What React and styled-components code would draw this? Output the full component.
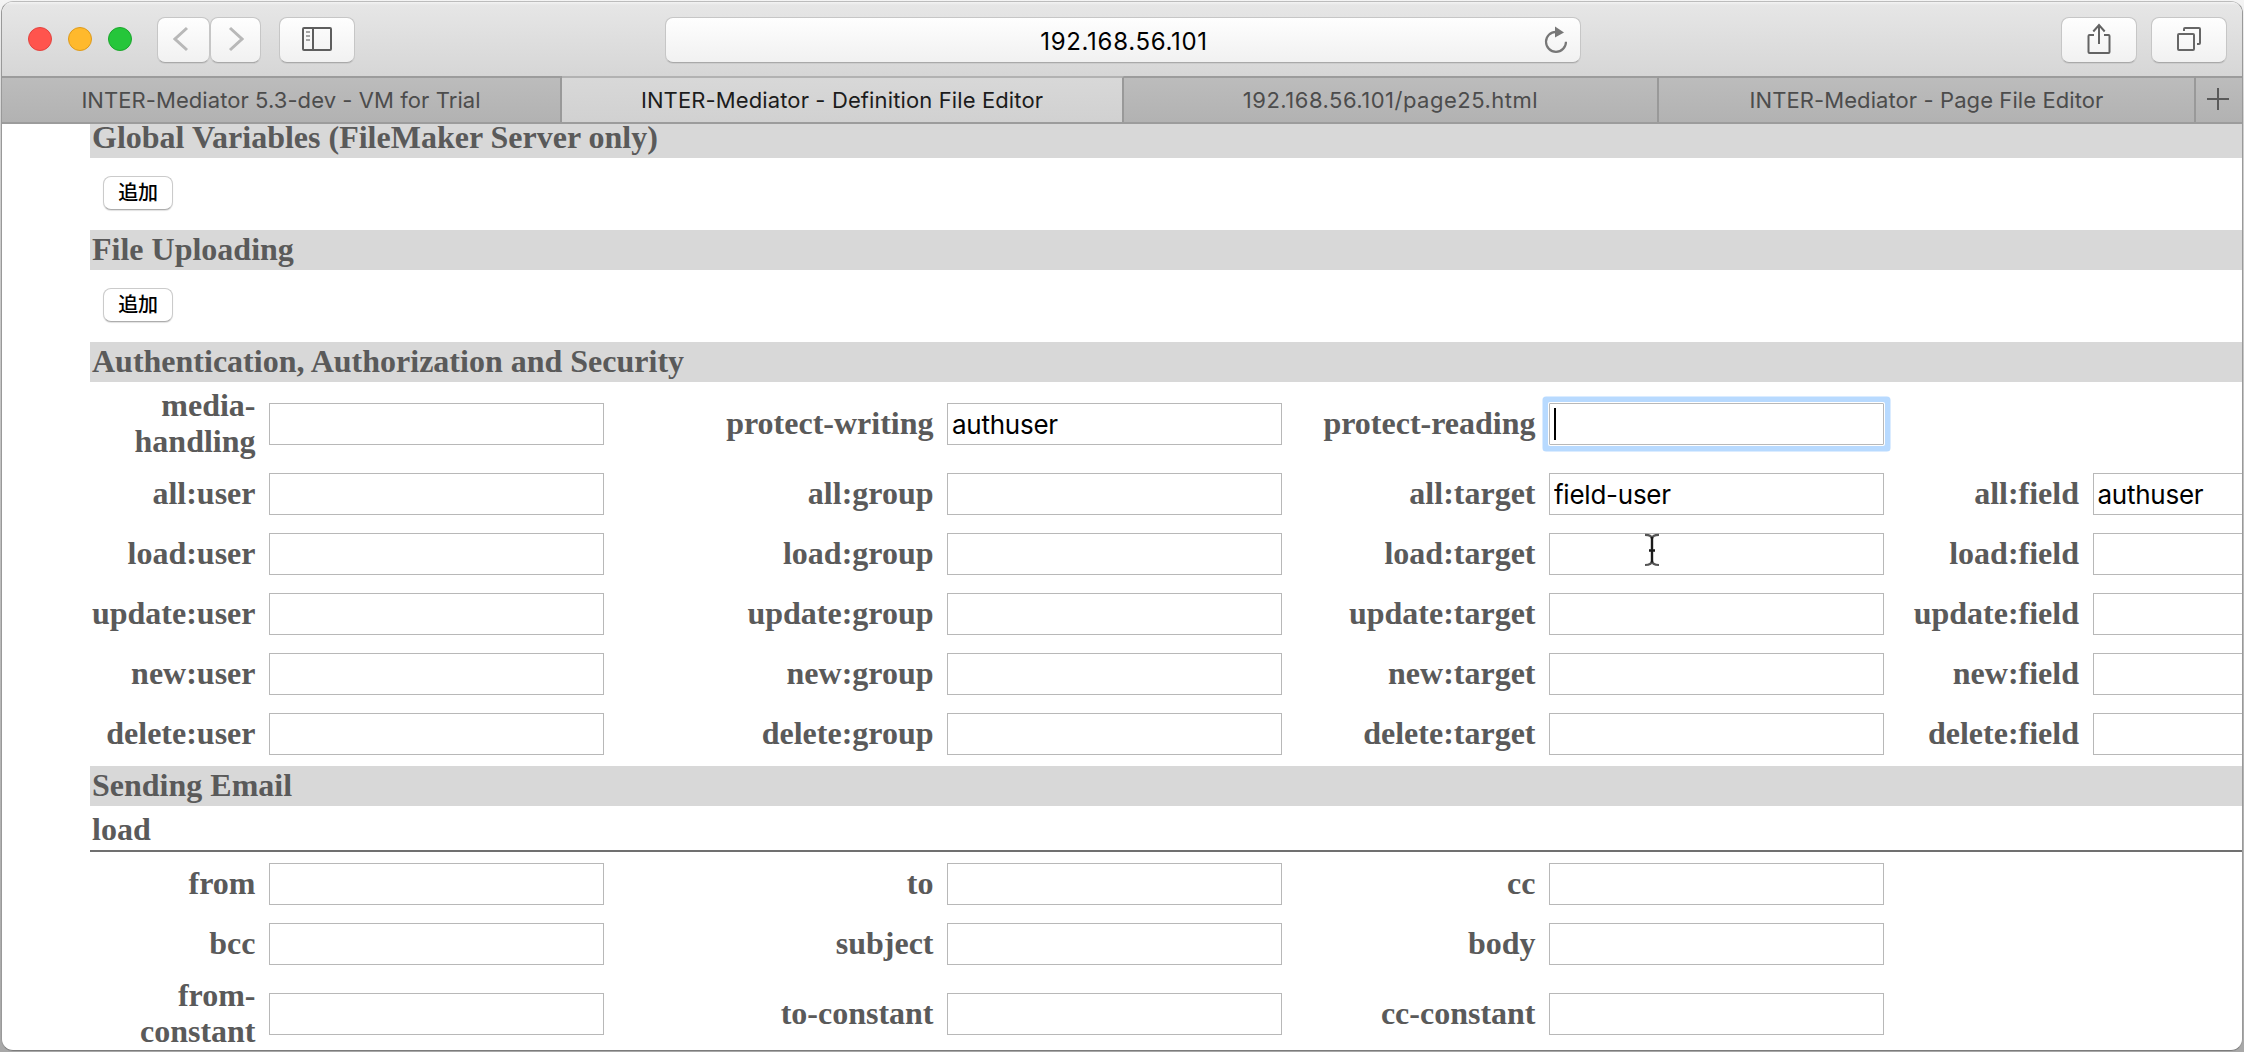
import React from "react";
import styled, { createGlobalStyle, css } from "styled-components";

const GlobalStyle = createGlobalStyle`
  * { box-sizing: border-box; }
  body {
    margin: 0;
    overflow: hidden;
    background: linear-gradient(#f4f4f4, #d0d0d0 12%, #a8a8a8);
  }
`;

const serif = `"Liberation Serif", "Times New Roman", serif`;
const sans = `Inter, "Liberation Sans", sans-serif`;

const Desktop = styled.div`
  width: 2244px;
  height: 1052px;
  padding: 1px;
`;

const Window = styled.div`
  display: flex;
  flex-direction: column;
  height: 1050px;
  border: 1px solid #999;
  border-top-color: #bcbcbc;
  border-bottom-color: #7c7c7c;
  border-radius: 12px;
  overflow: hidden;
  background: #fff;
`;

const Toolbar = styled.header`
  display: flex;
  align-items: center;
  flex: none;
  height: 74px;
  padding: 2px 15px 0 26px;
  background: linear-gradient(#f4f4f4 0, #e6e6e6 3px, #d6d6d6 100%);
`;

const TrafficLights = styled.div`
  display: flex;
  gap: 16px;
  margin-right: 25px;
  padding-bottom: 2px;
`;

const Light = styled.span`
  width: 24px;
  height: 24px;
  border-radius: 50%;
  background: ${(p) => p.$fill};
  border: 1px solid ${(p) => p.$edge};
`;

const raised = css`
  border: 1px solid #c6c6c6;
  border-bottom-color: #a9a9a9;
  background: linear-gradient(#fefefe, #f1f1f1);
  box-shadow: 0 1px 0 rgba(0, 0, 0, 0.06);
`;

const ToolButton = styled.button`
  ${raised}
  display: flex;
  align-items: center;
  justify-content: center;
  flex: none;
  width: ${(p) => p.$width}px;
  height: 46px;
  margin: 0 0 0 ${(p) => p.$before || 0}px;
  padding: 0 ${(p) => p.$nudge || 0}px 2px 0;
  border-radius: 8px;
`;

const AddressBar = styled.div`
  ${raised}
  display: flex;
  align-items: center;
  flex: none;
  width: 916px;
  height: 46px;
  margin-left: 310px;
  margin-right: auto;
  padding: 0 12px 0 38px;
  border-radius: 8px;
`;

const Address = styled.span`
  flex: 1;
  padding: 4px 0 0;
  text-align: center;
  font: 24px/30px ${sans};
  letter-spacing: 0.7px;
  color: #000;
`;

const TabBar = styled.nav`
  display: flex;
  flex: none;
  height: 48px;
  border-bottom: 2px solid #9c9c9c;
`;

const Tab = styled.div`
  display: flex;
  align-items: center;
  justify-content: center;
  width: ${(p) => p.$width}px;
  border-top: 2px solid ${(p) => (p.$active ? "#b2b2b2" : "#9c9c9c")};
  border-right: 2px solid #999;
  background: ${(p) =>
    p.$active ? "linear-gradient(#d8d8d8, #d1d1d1)" : "linear-gradient(#bcbcbc, #b2b2b2)"};
  color: ${(p) => (p.$active ? "#1c1c1c" : "#4c4c4c")};
  font: 22px/26px ${sans};
  letter-spacing: ${(p) => p.$tracking}px;
  white-space: nowrap;
`;

const NewTab = styled(Tab)`
  flex: 1;
  border-right: 0;
  padding: 0 2px 2px 0;
`;

const Page = styled.main`
  flex: 1;
  min-height: 0;
  overflow: hidden;
  padding-left: 88px;
  color: #5a5a5a;
  font: bold 32px/36px ${serif};
`;

const SectionTitle = styled.h2`
  height: ${(p) => (p.$clipped ? 34 : 40)}px;
  margin: 0;
  padding: 0 2px;
  background: #d8d8d8;
  font: inherit;
  line-height: ${(p) => (p.$clipped ? 26 : 38)}px;
`;

const ButtonRow = styled.div`
  height: 72px;
  padding: 18px 0 0 13px;
`;

const AddButton = styled.button`
  display: block;
  width: 70px;
  height: 34px;
  padding: 0 0 2px;
  border: 1px solid #cbcbcb;
  border-bottom-color: #adadad;
  border-radius: 8px;
  background: #fff;
  box-shadow: 0 1px 1px rgba(0, 0, 0, 0.12);
  font: 500 20px/30px "Noto Sans CJK JP", sans-serif;
  letter-spacing: -0.3px;
  color: #000;
`;

const SubTitle = styled.h3`
  height: 46px;
  margin: 0;
  padding: 5px 2px 0;
  border-bottom: 2px solid #707070;
  font: inherit;
  line-height: 36px;
`;

const FormBody = styled.div`
  padding: 2px 0;
`;

const FormRow = styled.div`
  display: flex;
  height: ${(p) => (p.$tall ? 80 : 60)}px;
`;

const FieldLabel = styled.label`
  display: flex;
  align-items: center;
  justify-content: flex-end;
  flex: none;
  width: ${(p) => p.$width}px;
  padding-bottom: 3px;
  text-align: right;
  white-space: pre-line;
`;

const Cell = styled.div`
  position: relative;
  display: flex;
  align-items: center;
  flex: none;
  width: 349px;
  padding-left: 13.5px;
`;

const TextField = styled.input`
  flex: none;
  width: 335px;
  height: 42px;
  margin: 0;
  padding: 0 0 0 4px;
  border: 1px solid #b8b8b8;
  border-radius: 0;
  outline: none;
  background: #fff;
  color: #000;
  font: 26px/32px ${sans};
  letter-spacing: -0.25px;
  ${(p) =>
    p.$focused &&
    css`
      box-shadow: 0 0 0 1px #fff, 0 0 0 6.5px #b8daff;
      border-radius: 1px;
    `}
`;

const Caret = styled.span`
  position: absolute;
  left: 18px;
  top: 50%;
  width: 2px;
  height: 32px;
  margin-top: -16px;
  background: #000;
`;

const Pointer = styled.svg`
  position: absolute;
  left: 107px;
  top: 9px;
`;

const labelWidths = [165.5, 329, 253, 194.5];

const authRows = [
  [["media-\nhandling"], ["protect-writing", "authuser"], ["protect-reading", "", "caret"]],
  [["all:user"], ["all:group"], ["all:target", "field-user"], ["all:field", "authuser"]],
  [["load:user"], ["load:group"], ["load:target", "", "pointer"], ["load:field"]],
  [["update:user"], ["update:group"], ["update:target"], ["update:field"]],
  [["new:user"], ["new:group"], ["new:target"], ["new:field"]],
  [["delete:user"], ["delete:group"], ["delete:target"], ["delete:field"]],
];

const mailRows = [
  [["from"], ["to"], ["cc"]],
  [["bcc"], ["subject"], ["body"]],
  [["from-\nconstant"], ["to-constant"], ["cc-constant"]],
];

function Form({ rows }) {
  return (
    <FormBody>
      {rows.map((row) => (
        <FormRow key={row[0][0]} $tall={row[0][0].includes("\n")}>
          {row.map(([label, value = "", extra], i) => (
            <React.Fragment key={label}>
              <FieldLabel $width={labelWidths[i]}>{label}</FieldLabel>
              <Cell>
                <TextField readOnly value={value} $focused={extra === "caret"} />
                {extra === "caret" && <Caret />}
                {extra === "pointer" && <IBeam />}
              </Cell>
            </React.Fragment>
          ))}
        </FormRow>
      ))}
    </FormBody>
  );
}

function IBeam() {
  return (
    <Pointer width="18" height="34" viewBox="0 0 18 34" fill="none">
      <path d="M2 1.8c4 0 7 1 7 4.2 0-3.2 3-4.2 7-4.2M2 32c4 0 7-1 7-4.2 0 3.2 3 4.2 7 4.2" stroke="#555" strokeWidth="2.2" />
      <path d="M9 4v25.5M6 17.5h6" stroke="#1a1a1a" strokeWidth="2.4" />
    </Pointer>
  );
}

function Chevron({ forward }) {
  return (
    <svg width="16" height="26" viewBox="0 0 16 26" fill="none" stroke="#b8b8b8" strokeWidth="3">
      <path d={forward ? "M2 2l12 11L2 24" : "M14 2L2 13l12 11"} />
    </svg>
  );
}

function SidebarIcon() {
  return (
    <svg width="30" height="24" viewBox="0 0 30 24" fill="none" stroke="#5e5e5e" strokeWidth="2">
      <rect x="1" y="1" width="28" height="22" rx="1" />
      <path d="M11 1v22" />
      <path d="M4 5h4M4 9h4M4 13h4" stroke="#8a8a8a" strokeWidth="1.6" />
    </svg>
  );
}

function ReloadIcon() {
  return (
    <svg width="24" height="28" viewBox="0 0 24 28" fill="none">
      <path d="M22 15.8A10 10 0 1 1 12 5.8h2" stroke="#777" strokeWidth="2.2" />
      <path d="M11 .5l9 6-9 5z" fill="#777" />
    </svg>
  );
}

function ShareIcon() {
  return (
    <svg width="24" height="32" viewBox="0 0 24 32" fill="none" stroke="#636363" strokeWidth="2">
      <path d="M7 12H2.5q-1 0-1 1v16q0 1 1 1h19q1 0 1-1V13q0-1-1-1H17" />
      <path d="M12 21V2M6.300 8.500L12 2l5.700 6.500" />
    </svg>
  );
}

function TabsIcon() {
  return (
    <svg width="24" height="24" viewBox="0 0 24 24" fill="none" stroke="#666" strokeWidth="2">
      <rect x="1" y="7" width="16" height="16" rx="1" />
      <path d="M7 4V2q0-1 1-1h14q1 0 1 1v14q0 1-1 1h-2" />
    </svg>
  );
}

function PlusIcon() {
  return (
    <svg width="22" height="22" viewBox="0 0 22 22" stroke="#5a5a5a" strokeWidth="2">
      <path d="M11 0v22M0 11h22" />
    </svg>
  );
}

export default function App() {
  return (
    <Desktop>
      <GlobalStyle />
      <Window>
        <Toolbar>
          <TrafficLights>
            <Light $fill="#ff544d" $edge="#e2433f" />
            <Light $fill="#ffb92c" $edge="#dd9a1c" />
            <Light $fill="#25c63a" $edge="#1ba62c" />
          </TrafficLights>
          <ToolButton $width={53} $nudge={5}><Chevron /></ToolButton>
          <ToolButton $width={51}><Chevron forward /></ToolButton>
          <ToolButton $width={76} $before={18}><SidebarIcon /></ToolButton>
          <AddressBar>
            <Address>192.168.56.101</Address>
            <ReloadIcon />
          </AddressBar>
          <ToolButton $width={76}><ShareIcon /></ToolButton>
          <ToolButton $width={76} $before={14}><TabsIcon /></ToolButton>
        </Toolbar>
        <TabBar>
          <Tab $width={560} $tracking={0.07}>INTER-Mediator 5.3-dev - VM for Trial</Tab>
          <Tab $width={562} $tracking={0.12} $active>INTER-Mediator - Definition File Editor</Tab>
          <Tab $width={535} $tracking={0.5}>192.168.56.101/page25.html</Tab>
          <Tab $width={537} $tracking={0.09}>INTER-Mediator - Page File Editor</Tab>
          <NewTab><PlusIcon /></NewTab>
        </TabBar>
        <Page>
          <SectionTitle $clipped>Global Variables (FileMaker Server only)</SectionTitle>
          <ButtonRow><AddButton>追加</AddButton></ButtonRow>
          <SectionTitle>File Uploading</SectionTitle>
          <ButtonRow><AddButton>追加</AddButton></ButtonRow>
          <SectionTitle>Authentication, Authorization and Security</SectionTitle>
          <Form rows={authRows} />
          <SectionTitle>Sending Email</SectionTitle>
          <SubTitle>load</SubTitle>
          <Form rows={mailRows} />
        </Page>
      </Window>
    </Desktop>
  );
}
